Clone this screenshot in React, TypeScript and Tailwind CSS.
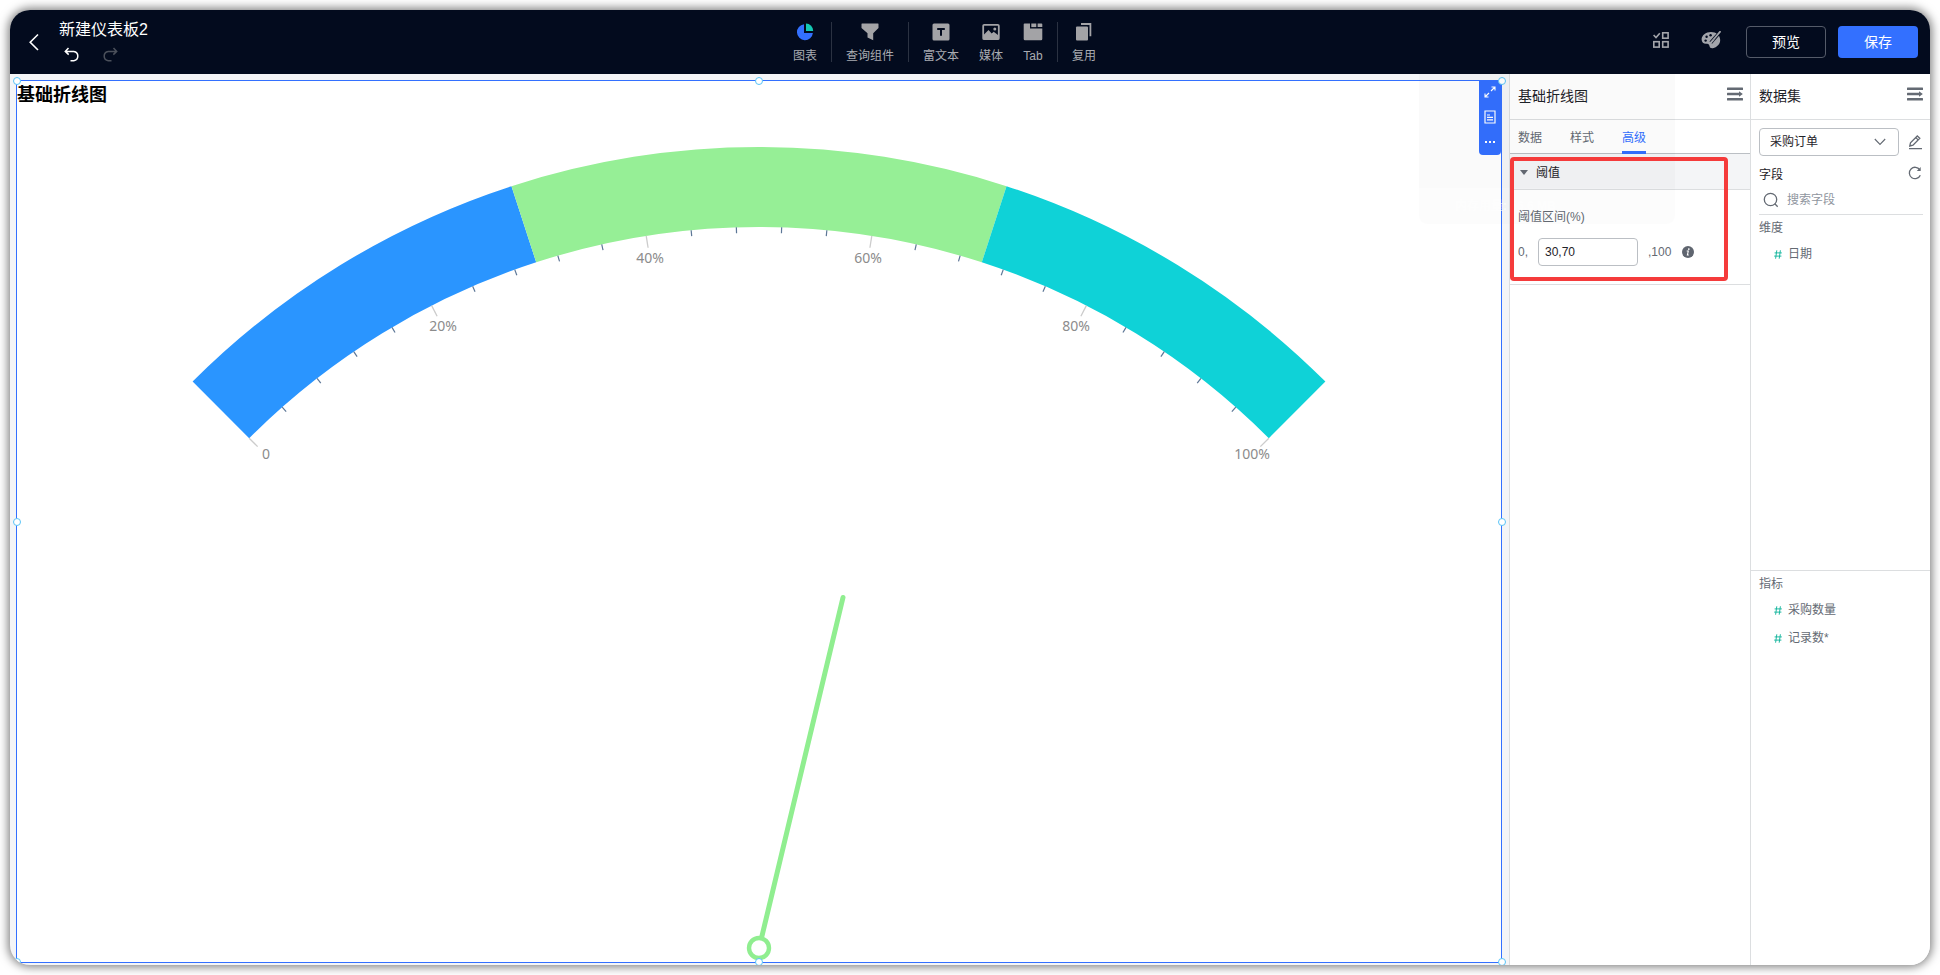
import React from "react";

type Pt = { x: number; y: number };

const CX = 759;
const CY = 948;
const OUTER = 801;
const INNER = 721;

function polar(radius: number, percent: number): Pt {
  const angle = ((-45 + percent * 0.9) * Math.PI) / 180;
  return { x: CX + radius * Math.sin(angle), y: CY - radius * Math.cos(angle) };
}

function band(from: number, to: number): string {
  const a = polar(OUTER, from);
  const b = polar(OUTER, to);
  const c = polar(INNER, to);
  const d = polar(INNER, from);
  return `M${a.x} ${a.y}A${OUTER} ${OUTER} 0 0 1 ${b.x} ${b.y}L${c.x} ${c.y}A${INNER} ${INNER} 0 0 0 ${d.x} ${d.y}Z`;
}

const bands = [
  { from: 0, to: 30, color: "#2a95ff" },
  { from: 30, to: 70, color: "#96ef96" },
  { from: 70, to: 100, color: "#0fd2d7" },
];

const labels = [
  { text: "0", x: 266, y: 459 },
  { text: "20%", x: 443, y: 331 },
  { text: "40%", x: 650, y: 263 },
  { text: "60%", x: 868, y: 263 },
  { text: "80%", x: 1076, y: 331 },
  { text: "100%", x: 1252, y: 459 },
];

function Gauge() {
  const ticks = Array.from({ length: 26 }, (_, i) => i);
  return (
    <svg className="min-h-0 w-full flex-1" viewBox="17 109 1484 853" role="img" aria-label="仪表盘">
      {bands.map((b) => (
        <path key={b.from} d={band(b.from, b.to)} fill={b.color} />
      ))}
      {ticks.map((i) => {
        const major = i % 5 === 0;
        const p = polar(INNER, i * 4);
        const q = polar(INNER - (major ? 12 : 6), i * 4);
        return (
          <line key={i} x1={p.x} y1={p.y} x2={q.x} y2={q.y} stroke={major ? "#cccccc" : "#5d7797"} strokeWidth={major ? 1.3 : 1.2} />
        );
      })}
      {labels.map((l) => (
        <text key={l.text} x={l.x} y={l.y} textAnchor="middle" fill="#8c8c8c" className="font-['Noto_Sans',sans-serif] text-[14px]">
          {l.text}
        </text>
      ))}
      <line x1="761.5" y1="938" x2="843" y2="597.5" stroke="#90ee90" strokeWidth="5" strokeLinecap="round" />
      <circle cx="759" cy="948" r="10" fill="#fff" stroke="#90ee90" strokeWidth="4.4" />
    </svg>
  );
}

function PieIcon() {
  return (
    <svg width="18" height="18" viewBox="0 0 18 18">
      <path d="M8 1.2V10h8.9A8 8 0 1 1 8 1.2Z" fill="#3370ff" />
      <path d="M10 0.6A7.4 7.4 0 0 1 17.2 8H10Z" fill="#14c9b4" />
    </svg>
  );
}
function FilterIcon() {
  return (
    <svg width="18" height="18" viewBox="0 0 18 18" fill="#a3a3a6">
      <path d="M1 0.5h16a.6.6 0 0 1 .5.6V5l-5.300 5.200V17.300L6.500 14.600V10.200L.5 5V1.100A.6.6 0 0 1 1 .5Z" />
    </svg>
  );
}
function RichTextIcon() {
  return (
    <svg width="18" height="18" viewBox="0 0 18 18">
      <rect x="0.500" y="0.500" width="17" height="17" rx="1.500" fill="#a3a3a6" />
      <path d="M5.200 6h7.600M9 6v6.800" stroke="#030b1e" strokeWidth="2" />
    </svg>
  );
}
function MediaIcon() {
  return (
    <svg width="18" height="18" viewBox="0 0 18 18">
      <rect x="1.200" y="1.800" width="15.600" height="14.400" rx="1" fill="none" stroke="#a3a3a6" strokeWidth="1.800" />
      <path d="M2 11.500 6.500 7l3.200 3.500 2-1.800L16 12v4H2Z" fill="#a3a3a6" />
      <circle cx="12.800" cy="6" r="1.500" fill="#a3a3a6" />
    </svg>
  );
}
function TabIcon() {
  return (
    <svg width="20" height="18" viewBox="0 0 20 18" fill="#a3a3a6">
      <path d="M1.500 0.500H7V5.500H19.300V16a1.300 1.300 0 0 1-1.300 1.300H2A1.300 1.300 0 0 1 .7 16V1.300A.8.8 0 0 1 1.500.5Z" />
      <rect x="8.300" y="0.500" width="5" height="3.600" />
      <path d="M14.600.5h3.900a.8.8 0 0 1 .8.8v2.800h-4.700Z" />
    </svg>
  );
}
function ReuseIcon() {
  return (
    <svg width="18" height="18" viewBox="0 0 18 18">
      <rect x="1" y="3.600" width="12" height="14" rx="1" fill="#a3a3a6" />
      <path d="M6 1h9.400v12.200" fill="none" stroke="#a3a3a6" strokeWidth="1.800" />
    </svg>
  );
}

function Tool({ icon, label }: { icon: React.ReactNode; label: string }) {
  return (
    <button className="flex flex-col items-center gap-1.5 pt-[3px] text-[12px] leading-[18px] text-[#a9abb1]">
      {icon}
      <span>{label}</span>
    </button>
  );
}
function Divider() {
  return <span className="h-10 w-px bg-[#2b3242]" />;
}

function FoldIcon() {
  return (
    <svg width="16" height="14" viewBox="0 0 16 14" fill="#646a73">
      <rect x="0" y="0.500" width="16" height="2.400" rx=".5" />
      <rect x="0" y="5.800" width="12.500" height="2.400" rx=".5" />
      <path d="M12 4.200 15.800 7 12 9.800Z" />
      <rect x="0" y="11.100" width="16" height="2.400" rx=".5" />
    </svg>
  );
}

function PanelHeader({ title }: { title: string }) {
  return (
    <div className="flex h-[46px] shrink-0 items-center justify-between border-b border-[#dcdee0] pr-[7px] pb-0.5 pl-2">
      <h2 className="text-[14px] leading-5 text-[#1f2329]">{title}</h2>
      <button aria-label="收起" className="mb-1">
        <FoldIcon />
      </button>
    </div>
  );
}

const handles = [
  "-left-1 -top-1",
  "left-1/2 -translate-x-1/2 -top-1",
  "-right-[5px] -top-1",
  "-left-1 top-1/2 -translate-y-1/2",
  "-right-[5px] top-1/2 -translate-y-1/2",
  "-left-1 -bottom-1",
  "left-1/2 -translate-x-1/2 -bottom-1",
  "-right-[5px] -bottom-1",
];

function Field({ name }: { name: string }) {
  return (
    <li className="flex h-7 items-center gap-1.5 pl-[15px] text-[12px] text-[#646a73]">
      <svg width="8" height="9" viewBox="0 0 8 9" fill="none" stroke="#1cb8a0" strokeWidth="1">
        <path d="M2.800.3 1.600 8.700M6.400.3 5.200 8.700M.6 2.900h7.200M.2 6.100h7.200" />
      </svg>
      {name}
    </li>
  );
}

/* Memory-usage hover card in the last frames of its fade-out. */
function FadingCard() {
  return (
    <div className="pointer-events-none absolute top-0 right-[255px] flex h-[214px] w-[256px] flex-col overflow-hidden rounded-b-lg pt-16">
      <div className="flex-1 bg-black/2" />
      <div className="flex h-9 items-center bg-black/[0.012] pl-9 text-[12px] font-bold text-white/60">内存用量: 56.6 MB</div>
    </div>
  );
}

export default function App() {
  return (
    <div className="flex h-screen bg-white p-[10px] font-['Liberation_Sans','Noto_Sans_CJK_SC',sans-serif]">
      <div className="relative flex min-w-0 flex-1 flex-col overflow-hidden rounded-[20px] bg-[#f4f5f7] shadow-[0_0_10px_2px_rgba(0,0,0,0.5)]">
        <header className="grid h-16 shrink-0 grid-cols-[1fr_auto_1fr] items-center bg-[#030b1e] pr-3 pl-[18px]">
          <div className="flex items-center gap-[19px]">
            <button aria-label="返回">
              <svg width="12" height="18" viewBox="0 0 12 18" fill="none" stroke="#fff" strokeWidth="1.600">
                <path d="M10 1.500 2.200 9.200 10 17" />
              </svg>
            </button>
            <div className="flex flex-col gap-[5px] pb-[3px]">
              <h1 className="text-[16px] leading-6 text-white">新建仪表板2</h1>
              <div className="flex gap-[22px] pl-[5px]">
                <button aria-label="撤销">
                  <svg width="16" height="16" viewBox="0 0 16 16" fill="none" stroke="#fff" strokeWidth="1.500">
                    <path d="M4.500 1 1.300 4.400l3.400 3.200M1.500 4.400h8.300a4.700 4.700 0 0 1 0 9.300H6.500" />
                  </svg>
                </button>
                <button aria-label="重做" disabled>
                  <svg width="16" height="16" viewBox="0 0 16 16" fill="none" stroke="#4b505b" strokeWidth="1.500">
                    <path d="M11.500 1l3.200 3.400-3.400 3.200M14.500 4.400H6.200a4.700 4.700 0 0 0 0 9.300H9.500" />
                  </svg>
                </button>
              </div>
            </div>
          </div>
          <nav className="mr-[57px] flex items-center gap-[14px]">
            <Tool icon={<PieIcon />} label="图表" />
            <Divider />
            <Tool icon={<FilterIcon />} label="查询组件" />
            <Divider />
            <div className="flex gap-5">
              <Tool icon={<RichTextIcon />} label="富文本" />
              <Tool icon={<MediaIcon />} label="媒体" />
              <Tool icon={<TabIcon />} label="Tab" />
            </div>
            <Divider />
            <Tool icon={<ReuseIcon />} label="复用" />
          </nav>
          <div className="flex items-center justify-end">
            <button aria-label="批量选择" className="mr-8 mb-1">
              <svg width="16" height="16" viewBox="0 0 16 16" fill="none" stroke="#a3a5ab" strokeWidth="1.600">
                <path d="M.6 3 3 5.500 6.800 1.200" />
                <rect x="9.700" y=".8" width="5.400" height="5.400" />
                <rect x=".8" y="9.700" width="5.400" height="5.400" />
                <rect x="9.700" y="9.700" width="5.400" height="5.400" />
              </svg>
            </button>
            <button aria-label="主题" className="mr-[25px] mb-1">
              <svg width="20" height="18" viewBox="0 0 20 18">
                <path d="M10 1C4.800 1 .6 4.400.6 8.600c0 3.200 2.600 4.600 5 4.200 1.700-.3 2.700.7 2.900 2.300.2 1.800 1.600 2.400 3.400 2.100 4-.7 7.300-3.900 7.300-8.100C19.200 4.400 15.200 1 10 1Z" fill="#a3a5ab" />
                <circle cx="4.600" cy="9.600" r="1.200" fill="#030b1e" />
                <circle cx="5.600" cy="5.800" r="1.200" fill="#030b1e" />
                <circle cx="9.600" cy="4.200" r="1.200" fill="#030b1e" />
                <path d="M20 0 9.800 11.600" stroke="#030b1e" strokeWidth="3.400" />
                <path d="M19.500.2 12.500 8.500" stroke="#a3a5ab" strokeWidth="1.800" />
                <path d="M12.800 8.300 9.400 12.200" stroke="#a3a5ab" strokeWidth="2" />
              </svg>
            </button>
            <button className="mr-3 h-8 w-20 rounded border border-[#555b69] text-[14px] text-white">预览</button>
            <button className="h-8 w-20 rounded bg-[#3370ff] text-[14px] text-white">保存</button>
          </div>
        </header>

        <div className="flex min-h-0 flex-1">
          <main className="flex min-w-0 flex-1 pt-1.5 pr-[7px] pb-0.5 pl-1.5">
            <section className="relative flex min-w-0 flex-1 flex-col border border-[#3370ff] bg-white">
              <h2 className="h-7 shrink-0 text-[18px] leading-7 font-bold text-black">基础折线图</h2>
              <Gauge />
              <div className="absolute -top-px right-0 flex w-[22px] flex-col items-center gap-3 rounded-b-sm bg-[#3370ff] pt-[6px] pb-[9px]">
                <button aria-label="全屏">
                  <svg width="12" height="12" viewBox="0 0 12 12" fill="none" stroke="#fff" strokeWidth="1.100">
                    <path d="M7.500 1H11v3.500M11 1 7 5M4.500 11H1V7.500M1 11l4-4" />
                  </svg>
                </button>
                <button aria-label="查看数据">
                  <svg width="12" height="14" viewBox="0 0 12 14" fill="none" stroke="#fff" strokeWidth="1.200">
                    <path d="M1 1h10v12H1ZM3 5h3M3 7.400h6M3 9.800h6" />
                  </svg>
                </button>
                <button aria-label="更多">
                  <svg width="12" height="10" viewBox="0 0 12 10" fill="#fff">
                    <path d="M1 5h2v2H1ZM5 5h2v2H5ZM9 5h2v2H9Z" />
                  </svg>
                </button>
              </div>
              {handles.map((pos) => (
                <span key={pos} className={`absolute size-2 rounded-full border border-[#59c4f7] bg-white ${pos}`} />
              ))}
            </section>
          </main>

          <aside className="flex w-[241px] shrink-0 flex-col border-l border-[#dcdee0] bg-white">
            <PanelHeader title="基础折线图" />
            <div className="flex h-[34px] shrink-0 gap-7 border-b border-[#bbbfc4] px-2 text-[12px] text-[#646a73]">
              <button className="pt-0.5">数据</button>
              <button className="pt-0.5">样式</button>
              <button className="-mb-px border-b-3 border-[#3370ff] pt-1 text-[#3370ff]">高级</button>
            </div>
            <div className="relative border-b border-[#dcdee0] text-[12px] text-[#646a73]">
              <h3>
                <button className="flex h-9 w-full items-center gap-2 border-b border-[#dcdee0] bg-[#f4f5f7] px-[10px] pt-0.5 text-[#1f2329]">
                  <svg width="8" height="5" viewBox="0 0 8 5" fill="#646a73">
                    <path d="M0 0h8L4 5Z" />
                  </svg>
                  阈值
                </button>
              </h3>
              <div className="flex flex-col gap-3 px-2 pt-[18px] pb-[18px]">
                <label htmlFor="threshold" className="leading-[18px]">
                  阈值区间(%)
                </label>
                <div className="flex items-center">
                  <span className="w-5">0,</span>
                  <input id="threshold" defaultValue="30,70" className="h-7 w-[100px] rounded border border-[#bbbfc4] px-1.5 text-[12px] text-[#1f2329]" />
                  <span className="mr-[11px] ml-2.5">,100</span>
                  <svg width="12" height="12" viewBox="0 0 12 12">
                    <circle cx="6" cy="6" r="6" fill="#5f656f" />
                    <circle cx="6.800" cy="3.100" r=".9" fill="#fff" />
                    <path d="M4.700 5h1.600L5.400 9h1.400" fill="none" stroke="#fff" strokeWidth="1.100" />
                  </svg>
                </div>
              </div>
              <div className="pointer-events-none absolute top-[3px] right-[22px] bottom-[3px] left-0 z-10 rounded border-4 border-[#f53b3b]" />
            </div>
          </aside>

          <aside className="flex w-[180px] shrink-0 flex-col border-l border-[#dcdee0] bg-white text-[12px] text-[#646a73]">
            <PanelHeader title="数据集" />
            <div className="flex min-h-0 flex-[17] flex-col pt-2 pr-[7px] pl-2">
              <div className="flex items-center justify-between">
                <div className="relative w-[140px]">
                  <select aria-label="数据集" className="h-7 w-full appearance-none rounded border border-[#bbbfc4] bg-white pl-[10px] text-[12px] text-[#1f2329]">
                    <option>采购订单</option>
                  </select>
                  <svg className="pointer-events-none absolute top-[10px] right-[13px]" width="12" height="8" viewBox="0 0 12 8" fill="none" stroke="#646a73" strokeWidth="1.100">
                    <path d="M.8 1 6 6.500 11.200 1" />
                  </svg>
                </div>
                <button aria-label="编辑">
                  <svg width="16" height="16" viewBox="0 0 16 16" fill="none" stroke="#646a73" strokeWidth="1.300">
                    <path d="M2.800 12 3.500 8.800 10.300 2 12.800 4.300 6 11.200ZM8.800 3.600l2.400 2.300M2 14.600h13" />
                  </svg>
                </button>
              </div>
              <div className="mt-[9px] flex h-5 items-center justify-between">
                <h3 className="text-[#1f2329]">字段</h3>
                <button aria-label="刷新" className="mb-1">
                  <svg width="16" height="14" viewBox="0 0 16 14" fill="none" stroke="#646a73" strokeWidth="1.300">
                    <path d="M13.300 9.200A5.700 5.700 0 1 1 12.800 3.800" />
                    <path d="M13.700 1v4H9.800Z" fill="#646a73" stroke="none" />
                  </svg>
                </button>
              </div>
              <label className="flex h-[30px] items-center gap-2 border-b border-[#dcdee0] pl-1">
                <svg width="16" height="16" viewBox="0 0 16 16" className="shrink-0" fill="none" stroke="#646a73" strokeWidth="1.300">
                  <circle cx="7.500" cy="7.500" r="6.200" />
                  <path d="m11.800 11.800 2.900 3" />
                </svg>
                <input placeholder="搜索字段" aria-label="搜索字段" className="w-full min-w-0 bg-transparent text-[12px] outline-none placeholder:text-[#8f959e]" />
              </label>
              <h3 className="mt-1 leading-[18px]">维度</h3>
              <ul className="mt-[3px]">
                <Field name="日期" />
              </ul>
            </div>
            <div className="flex min-h-0 flex-[15] flex-col border-t border-[#dcdee0] px-2 pt-1">
              <h3 className="leading-[18px]">指标</h3>
              <ul className="mt-[3px]">
                <Field name="采购数量" />
                <Field name="记录数*" />
              </ul>
            </div>
          </aside>
        </div>
        <FadingCard />
      </div>
    </div>
  );
}
